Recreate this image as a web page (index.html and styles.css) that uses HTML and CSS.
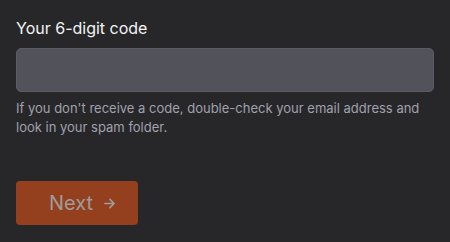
FILE: index.html
```html
<!DOCTYPE html>
<html lang="en">
<head>
  <meta charset="UTF-8" />
  <title>Verify code</title>
  <link rel="stylesheet" href="styles.css">
</head>
<body>
  <form class="code-form">
    <label class="field-label" for="codeInput">Your 6-digit code</label>
    <input type="text" id="codeInput" class="code-input" inputmode="numeric" maxlength="6" />
    <p class="hint">If you don't receive a code, double-check your email address and look in your spam folder.</p>

    <button type="submit" class="next-btn" disabled>
      Next
      <svg class="arrow" width="11" height="11" viewBox="0 0 12 12" fill="none">
        <path d="M1 6h10M6.5 1.5L11 6l-4.5 4.5" stroke="currentColor" stroke-width="1.7" stroke-linecap="round" stroke-linejoin="round"/>
      </svg>
    </button>
  </form>
</body>
</html>
```

FILE: styles.css
```css
body {
  margin: 0;
  background-color: #27272a;
  font-family: Inter, 'Noto Sans', sans-serif;
  color: #f4f4f5;
}
.code-form {
  padding: 17px 16px;
  display: flex;
  flex-direction: column;
  align-items: flex-start;
}
.field-label {
  font-size: 16px;
  line-height: 22px;
  margin-bottom: 9px;
}
.code-input {
  box-sizing: border-box;
  width: 418px;
  height: 44px;
  margin: 0;
  border: 1px solid #5b5b63;
  border-radius: 5px;
  background-color: #52525b;
  color: #f4f4f5;
  font-family: inherit;
  font-size: 16px;
  padding: 0 12px;
}
.hint {
  margin: 7px 0 0;
  font-size: 13px;
  line-height: 19px;
  color: #a1a1aa;
}
.next-btn {
  margin-top: 44px;
  width: 122px;
  height: 44px;
  border: none;
  border-radius: 4px;
  background-color: #94401e;
  color: #9f9c9b;
  font-family: inherit;
  font-size: 20px;
  display: flex;
  align-items: center;
  gap: 11px;
  padding: 0 0 0 33px;
}
.arrow {
  display: block;
  margin-top: 1px;
}
```
